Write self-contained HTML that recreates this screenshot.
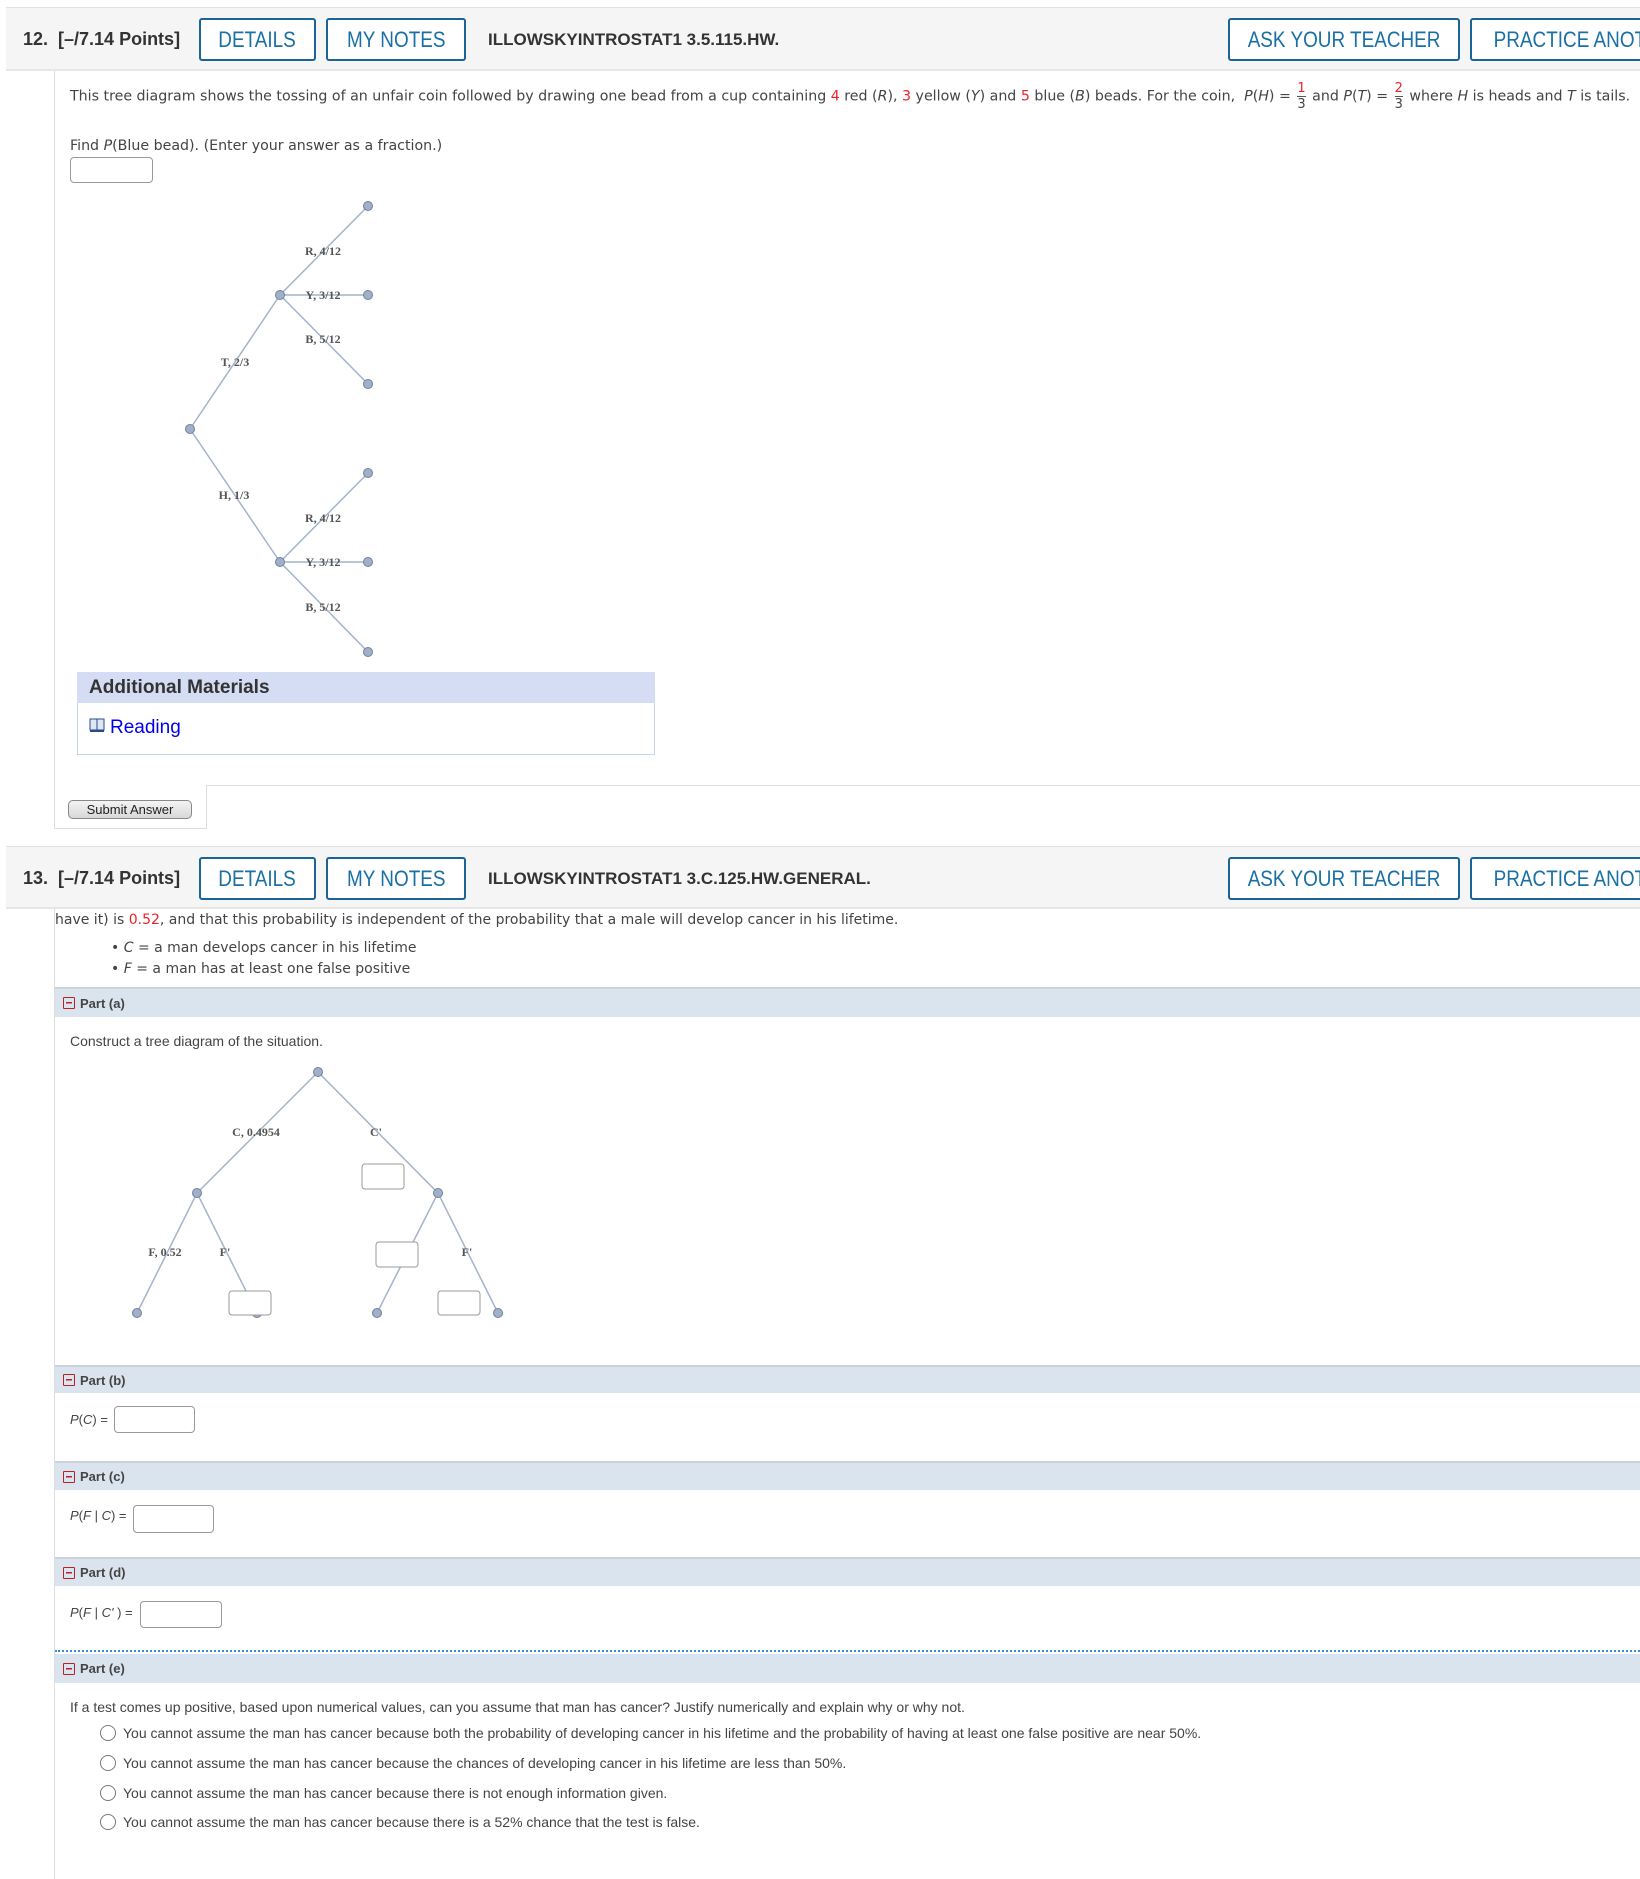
<!DOCTYPE html>
<html><head><meta charset="utf-8"><style>
*{margin:0;padding:0;box-sizing:border-box}
body{width:1640px;height:1879px;background:#fff;position:relative;overflow:hidden;font-family:"DejaVu Sans","Liberation Sans",sans-serif;color:#333}
.a{position:absolute;white-space:nowrap}
.hdr{position:absolute;left:6px;right:0;background:#f5f5f5;border-top:1px solid #e2e2e2;border-bottom:2px solid #e6e6e6}
.hd{font-family:"Liberation Sans",sans-serif;font-weight:bold;color:#333}
.btn{position:absolute;border:2px solid #1a6496;border-radius:3px;background:#fff;color:#1a6fa3;font-family:"Liberation Sans",sans-serif;font-size:22px;display:flex;align-items:center;justify-content:center;white-space:nowrap;overflow:hidden}
.btn span{display:inline-block;transform:scaleX(0.86)}
.txt{font-size:14.2px;color:#444}
.red{color:#e8242a}
.frac{display:inline-block;vertical-align:middle;text-align:center;font-size:13px;line-height:15px;margin:0 2px}
.frac span{display:block}
.frac .n{border-bottom:1px solid #555}
.part{position:absolute;left:55px;right:0;background:#dae4ee;border-top:2px solid #ccd3da;font-family:"Liberation Sans",Arial,sans-serif;font-weight:bold;font-size:13px;color:#444;padding-left:25px;display:flex;align-items:center}
.part:before{content:"";position:absolute;left:8px;top:50%;width:10px;height:10px;margin-top:-6px;border:1.5px solid #b22;border-radius:1px;background:linear-gradient(#b22,#b22) center/6px 1.5px no-repeat}
.ar{font-family:"Liberation Sans",Arial,sans-serif;color:#444}
.inp{position:absolute;border:1px solid #999;border-radius:4px;background:#fff}
.rad{position:absolute;width:16px;height:16px;border:1.5px solid #777;border-radius:50%;background:#fff}
</style></head><body>

<!-- Q12 header -->
<div class="hdr" style="top:7px;height:64px"></div>
<div class="a hd" style="left:23px;top:29px;font-size:18px">12.&nbsp; [–/7.14 Points]</div>
<div class="btn" style="left:199px;top:18px;width:117px;height:43px"><span>DETAILS</span></div>
<div class="btn" style="left:326px;top:18px;width:140px;height:43px"><span>MY NOTES</span></div>
<div class="a hd" style="left:488px;top:30px;font-size:17px">ILLOWSKYINTROSTAT1 3.5.115.HW.</div>
<div class="btn" style="left:1228px;top:18px;width:232px;height:43px"><span>ASK YOUR TEACHER</span></div>
<div class="btn" style="left:1470px;top:18px;width:220px;height:43px;justify-content:flex-start;padding-left:6px"><span>PRACTICE ANOTHER</span></div>

<div class="a" style="left:54px;top:71px;width:1px;height:714px;background:#ddd"></div>

<div class="a txt" style="left:70px;top:81px">This tree diagram shows the tossing of an unfair coin followed by drawing one bead from a cup containing <span class="red">4</span> red (<i>R</i>), <span class="red">3</span> yellow (<i>Y</i>) and <span class="red">5</span> blue (<i>B</i>) beads. For the coin,&nbsp; <i>P</i>(<i>H</i>) = <span class="frac"><span class="n red">1</span><span>3</span></span> and <i>P</i>(<i>T</i>) = <span class="frac"><span class="n red">2</span><span>3</span></span> where <i>H</i> is heads and <i>T</i> is tails.</div>
<div class="a txt" style="left:70px;top:138px">Find <i>P</i>(Blue bead). (Enter your answer as a fraction.)</div>
<div class="inp" style="left:70px;top:157px;width:83px;height:26px"></div>

<svg class="a" style="left:0;top:0" width="700" height="700">
<g stroke="#a3b3cc" stroke-width="1.5">
<line x1="190" y1="429" x2="280" y2="295"/><line x1="190" y1="429" x2="280" y2="562"/>
<line x1="280" y1="295" x2="368" y2="206"/><line x1="280" y1="295" x2="368" y2="295"/><line x1="280" y1="295" x2="368" y2="384"/>
<line x1="280" y1="562" x2="368" y2="473"/><line x1="280" y1="562" x2="368" y2="562"/><line x1="280" y1="562" x2="368" y2="652"/>
</g>
<g fill="#9fb0c8" stroke="#71819c" stroke-width="1">
<circle cx="190" cy="429" r="4.5"/><circle cx="280" cy="295" r="4.5"/><circle cx="280" cy="562" r="4.5"/>
<circle cx="368" cy="206" r="4.5"/><circle cx="368" cy="295" r="4.5"/><circle cx="368" cy="384" r="4.5"/>
<circle cx="368" cy="473" r="4.5"/><circle cx="368" cy="562" r="4.5"/><circle cx="368" cy="652" r="4.5"/>
</g>
<g font-family="Liberation Serif,serif" font-size="12" font-weight="bold" fill="#555" text-anchor="middle">
<text x="323" y="255">R, 4/12</text><text x="323" y="299">Y, 3/12</text><text x="323" y="343">B, 5/12</text>
<text x="235" y="366">T, 2/3</text><text x="234" y="499">H, 1/3</text>
<text x="323" y="522">R, 4/12</text><text x="323" y="566">Y, 3/12</text><text x="323" y="611">B, 5/12</text>
</g></svg>

<!-- Additional materials -->
<div class="a" style="left:77px;top:672px;width:578px;height:83px;border:1px solid #c8d2ee"></div>
<div class="a" style="left:77px;top:672px;width:578px;height:31px;background:#d5ddf5"></div>
<div class="a ar" style="left:89px;top:677px;font-size:19px;font-weight:bold;color:#333">Additional Materials</div>
<svg class="a" style="left:89px;top:718px" width="17" height="15"><rect x="1" y="1" width="7" height="11" fill="#dde6f5" stroke="#2a4a8a"/><rect x="8" y="1" width="7" height="11" fill="#dde6f5" stroke="#2a4a8a"/><rect x="1" y="12" width="14" height="2" fill="#2a4a8a"/></svg>
<div class="a ar" style="left:110px;top:717px;font-size:19px;color:#0000ee">Reading</div>

<!-- submit tab -->
<div class="a" style="left:206px;top:785px;right:0;height:1px;background:#ddd"></div>
<div class="a" style="left:54px;top:785px;width:153px;height:44px;border-left:1px solid #ddd;border-right:1px solid #ddd;border-bottom:1px solid #ddd"></div>
<div class="a ar" style="left:68px;top:800px;width:124px;height:19px;border:1px solid #888;border-radius:5px;background:linear-gradient(#f4f4f4,#d8d8d8);font-size:13px;color:#222;text-align:center;line-height:17px">Submit Answer</div>

<!-- Q13 header -->
<div class="hdr" style="top:846px;height:63px"></div>
<div class="a hd" style="left:23px;top:868px;font-size:18px">13.&nbsp; [–/7.14 Points]</div>
<div class="btn" style="left:199px;top:857px;width:117px;height:43px"><span>DETAILS</span></div>
<div class="btn" style="left:326px;top:857px;width:140px;height:43px"><span>MY NOTES</span></div>
<div class="a hd" style="left:488px;top:869px;font-size:17px">ILLOWSKYINTROSTAT1 3.C.125.HW.GENERAL.</div>
<div class="btn" style="left:1228px;top:857px;width:232px;height:43px"><span>ASK YOUR TEACHER</span></div>
<div class="btn" style="left:1470px;top:857px;width:220px;height:43px;justify-content:flex-start;padding-left:6px"><span>PRACTICE ANOTHER</span></div>

<div class="a" style="left:54px;top:909px;width:1px;height:970px;background:#ddd"></div>
<div class="a txt" style="left:55px;top:912px;font-size:14px">have it) is <span class="red">0.52</span>, and that this probability is independent of the probability that a male will develop cancer in his lifetime.</div>
<div class="a txt" style="left:111px;top:940px;font-size:14px">• <i>C</i> = a man develops cancer in his lifetime</div>
<div class="a txt" style="left:111px;top:961px;font-size:14px">• <i>F</i> = a man has at least one false positive</div>

<div class="part" style="top:987px;height:30px">Part (a)</div>
<div class="a ar" style="left:70px;top:1033px;font-size:14px">Construct a tree diagram of the situation.</div>

<svg class="a" style="left:0;top:0" width="700" height="1340">
<g stroke="#a3b3cc" stroke-width="1.5">
<line x1="318" y1="1072" x2="197" y2="1193"/><line x1="318" y1="1072" x2="438" y2="1193"/>
<line x1="197" y1="1193" x2="137" y2="1313"/><line x1="197" y1="1193" x2="257" y2="1313"/>
<line x1="438" y1="1193" x2="377" y2="1313"/><line x1="438" y1="1193" x2="498" y2="1313"/>
</g>
<g fill="#9fb0c8" stroke="#71819c" stroke-width="1">
<circle cx="318" cy="1072" r="4.5"/><circle cx="197" cy="1193" r="4.5"/><circle cx="438" cy="1193" r="4.5"/>
<circle cx="137" cy="1313" r="4.5"/><circle cx="257" cy="1313" r="4.5"/><circle cx="377" cy="1313" r="4.5"/><circle cx="498" cy="1313" r="4.5"/>
</g>
<g font-family="Liberation Serif,serif" font-size="12" font-weight="bold" fill="#555" text-anchor="middle">
<text x="256" y="1136">C, 0.4954</text><text x="376" y="1136">C'</text>
<text x="165" y="1256">F, 0.52</text><text x="225" y="1256">F'</text><text x="467" y="1256">F'</text>
</g>
<g fill="#fff" stroke="#999" stroke-width="1">
<rect x="362" y="1164" width="42" height="25" rx="3"/><rect x="376" y="1242" width="42" height="25" rx="3"/>
<rect x="229" y="1291" width="42" height="24" rx="3"/><rect x="438" y="1291" width="42" height="24" rx="3"/>
</g></svg>

<div class="part" style="top:1365px;height:28px">Part (b)</div>
<div class="a ar" style="left:70px;top:1412px;font-size:13px"><i>P</i>(<i>C</i>) =</div>
<div class="inp" style="left:114px;top:1406px;width:81px;height:27px"></div>

<div class="part" style="top:1461px;height:29px">Part (c)</div>
<div class="a ar" style="left:70px;top:1508px;font-size:13px"><i>P</i>(<i>F</i> | <i>C</i>) =</div>
<div class="inp" style="left:133px;top:1505px;width:81px;height:28px"></div>

<div class="part" style="top:1557px;height:29px">Part (d)</div>
<div class="a ar" style="left:70px;top:1605px;font-size:13px"><i>P</i>(<i>F</i> | <i>C'</i> ) =</div>
<div class="inp" style="left:140px;top:1601px;width:82px;height:27px"></div>

<div class="a" style="left:55px;right:0;top:1650px;height:0;border-top:2px dotted #3a8fd8"></div>
<div class="part" style="top:1654px;height:29px;border-top:none">Part (e)</div>
<div class="a ar" style="left:70px;top:1699px;font-size:14px">If a test comes up positive, based upon numerical values, can you assume that man has cancer? Justify numerically and explain why or why not.</div>
<div class="rad" style="left:100px;top:1725px"></div>
<div class="a ar" style="left:123px;top:1725px;font-size:14px">You cannot assume the man has cancer because both the probability of developing cancer in his lifetime and the probability of having at least one false positive are near 50%.</div>
<div class="rad" style="left:100px;top:1755px"></div>
<div class="a ar" style="left:123px;top:1755px;font-size:14px">You cannot assume the man has cancer because the chances of developing cancer in his lifetime are less than 50%.</div>
<div class="rad" style="left:100px;top:1785px"></div>
<div class="a ar" style="left:123px;top:1785px;font-size:14px">You cannot assume the man has cancer because there is not enough information given.</div>
<div class="rad" style="left:100px;top:1814px"></div>
<div class="a ar" style="left:123px;top:1814px;font-size:14px">You cannot assume the man has cancer because there is a 52% chance that the test is false.</div>
</body></html>
